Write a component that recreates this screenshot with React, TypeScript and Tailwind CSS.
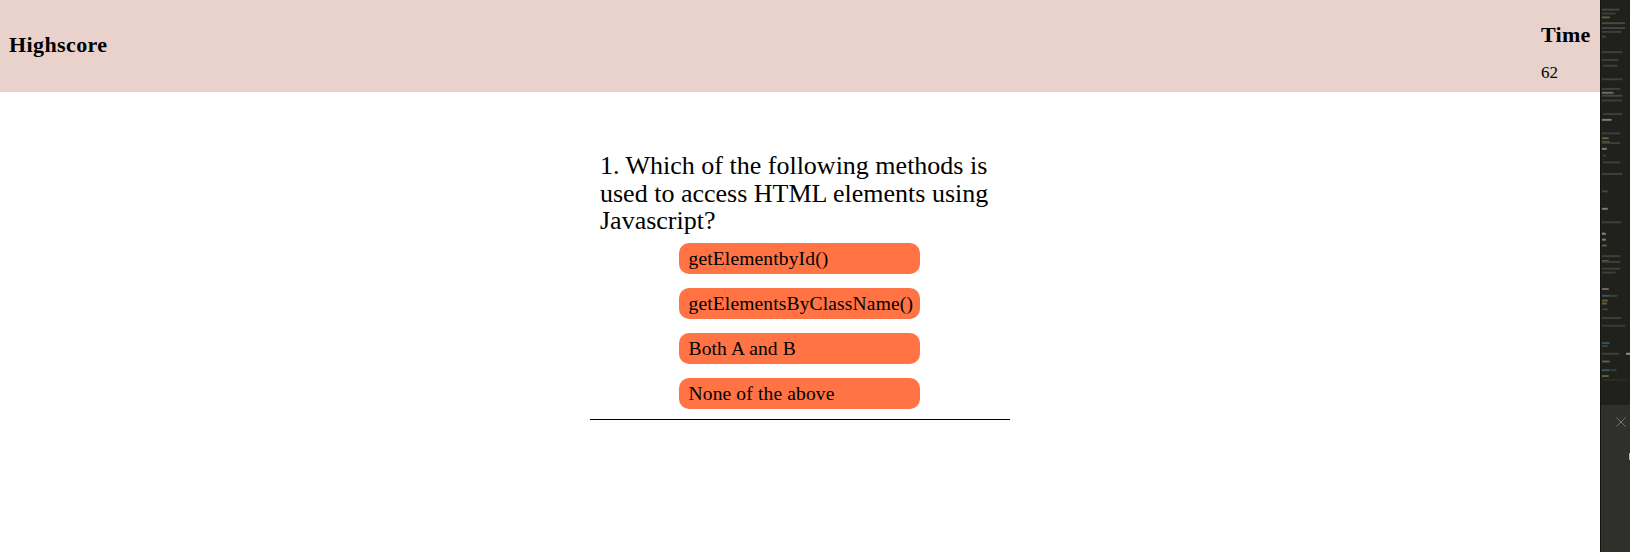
const options = ['getElementbyId()', 'getElementsByClassName()', 'Both A and B', 'None of the above'];

// editor minimap peeking in at the right edge: [x, y, width, colour]
const minimapLines: [number, number, number, string][] = [
  [1, 2, 18, '#55564f'], [1, 6, 14, '#4c4d47'], [1, 10, 8, '#7d7a45'], [1, 16, 24, '#5a5b56'],
  [1, 21, 24, '#55564f'], [1, 25, 20, '#4c4d47'], [1, 30, 4, '#55564f'], [1, 46, 21, '#4c4d47'],
  [1, 54, 17, '#4c4d47'], [2, 60, 15, '#4c4d47'], [1, 74, 21, '#4c4d47'], [1, 84, 19, '#4c4d47'],
  [1, 88, 12, '#8a8b84'], [1, 91, 21, '#55564f'], [1, 96, 21, '#4c4d47'], [2, 110, 20, '#4c4d47'],
  [1, 116, 10, '#a3a49c'], [1, 130, 19, '#4c4d47'], [1, 135, 7, '#85823f'], [1, 139, 8, '#7d7a45'],
  [1, 140, 19, '#4c4d47'], [1, 146, 5, '#a3a49c'], [2, 153, 3, '#4c4d47'], [2, 160, 18, '#4c4d47'],
  [1, 172, 21, '#4c4d47'], [1, 190, 6, '#55564f'], [1, 208, 6, '#a3a49c'], [1, 222, 20, '#4c4d47'],
  [1, 233, 3, '#4c4d47'], [1, 234, 4, '#a3a49c'], [1, 240, 4, '#a3a49c'], [1, 246, 5, '#7d7a45'],
  [1, 257, 19, '#4c4d47'], [1, 262, 7, '#7d7a45'], [1, 263, 19, '#4c4d47'], [1, 270, 19, '#4c4d47'],
  [1, 274, 14, '#4c4d47'], [1, 291, 7, '#8a8b84'], [1, 298, 8, '#3f6a80'], [9, 298, 8, '#4c4d47'],
  [1, 303, 6, '#7d7a45'], [1, 306, 5, '#7d7a45'], [1, 312, 6, '#4c4d47'], [1, 321, 20, '#4c4d47'],
  [1, 329, 24, '#44453f'], [1, 347, 8, '#3f6a80'], [1, 350, 6, '#4c4d47'], [1, 358, 18, '#4c4d47'],
  [1, 366, 8, '#7d7a45'], [1, 375, 8, '#3f6a80'], [10, 375, 6, '#4c4d47'], [1, 381, 7, '#7d7a45'],
  [2, 385, 24, '#2f302b'],
];

function SideStrip() {
  return (
    <div className="flex h-[552px] w-[30px] shrink-0 flex-col border-l border-[#15150f] bg-[#20211c]">
      <svg className="h-[405px] w-full shrink-0 opacity-70 blur-[0.4px]" viewBox="0 0 30 405">
        <rect x="26" y="358" width="4" height="2" fill="#c4c5bd" />
        {minimapLines.map(([x, y, w, c], i) => (
          <rect key={i} x={x} y={y} width={w} height="2" fill={c} />
        ))}
      </svg>
      <div className="relative flex-1 bg-[#2f302b]">
        <svg className="absolute left-[15px] top-[12px] h-[10px] w-[10px]" viewBox="0 0 10 10">
          <path d="M0.5 0.5L9.5 9.5M9.5 0.5L0.5 9.5" stroke="#77786f" strokeWidth="1" fill="none" />
        </svg>
        <div className="absolute right-0 top-[48px] h-[7px] w-px bg-[#a6cc3a]" />
      </div>
    </div>
  );
}

export default function App() {
  return (
    <div className="flex h-[552px] w-full overflow-hidden bg-white font-['Liberation_Serif',serif] text-black">
      <div className="min-w-0 flex-1">
        <header className="flex h-[92px] items-center justify-between bg-[#e9d2cc] pl-[9px] pr-[10px]">
          <h2 className="mb-[4px] text-[22px] font-bold tracking-[0.4px]">Highscore</h2>
          <div className="w-[49px]">
            <h2 className="mt-[13px] text-[22px] font-bold leading-[24px] tracking-[0.3px]">Time</h2>
            <p className="mt-[16px] text-[17px] leading-[20px]">62</p>
          </div>
        </header>
        <main className="mx-auto mt-[60px] w-[420px] border-b border-black pb-[10px]">
          <p className="pl-[10px] text-[26px] leading-[27.5px]">
            1. Which of the following methods is used to access HTML elements using Javascript?
          </p>
          <div className="mt-[8px] flex flex-col items-center gap-[14px] pr-[2px]">
            {options.map((option) => (
              <button
                key={option}
                className="h-[31px] w-[241px] rounded-[10px] bg-[#ff7345] pl-[10px] text-left text-[19.5px] leading-[31px] tracking-[0.15px]"
              >
                {option}
              </button>
            ))}
          </div>
        </main>
      </div>
      <SideStrip />
    </div>
  );
}
